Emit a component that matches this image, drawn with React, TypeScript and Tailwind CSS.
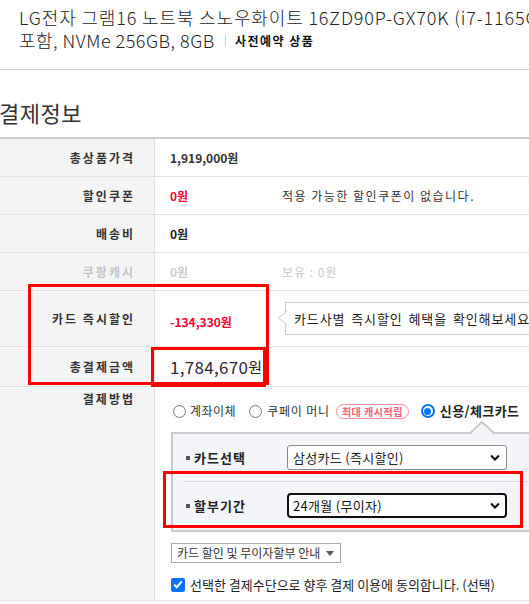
import React from "react";

function Row({
  label,
  h,
  muted,
  children,
  top,
}: {
  label: string;
  h: string;
  muted?: boolean;
  top?: boolean;
  children?: React.ReactNode;
}) {
  return (
    <div className={`flex border-b border-[#e2e2e2] ${h}`}>
      <div
        className={`w-[155px] shrink-0 bg-[#f4f4f4] border-r border-[#e2e2e2] flex justify-end pr-[19px] text-[12px] font-bold tracking-[2px] ${
          top ? "items-start pt-[3px] leading-[18px]" : "items-center"
        } ${muted ? "text-[#c4c4c4]" : "text-[#333]"}`}
      >
        {label}
      </div>
      <div className={`flex-1 flex pl-[15px] text-[12px] ${top ? "flex-col items-start pl-[16px]" : "items-center"}`}>
        {children}
      </div>
    </div>
  );
}

function Chevron() {
  return (
    <svg width="10" height="7" viewBox="0 0 10 7" className="shrink-0">
      <path d="M1 1.5 L5 5.5 L9 1.5" fill="none" stroke="#111" strokeWidth="2" />
    </svg>
  );
}

function Radio({ checked }: { checked?: boolean }) {
  if (checked)
    return (
      <span className="w-[14px] h-[14px] rounded-full border-[2px] border-[#0b74ff] flex items-center justify-center shrink-0 bg-white">
        <span className="w-[7px] h-[7px] rounded-full bg-[#0b74ff]" />
      </span>
    );
  return <span className="block w-[13px] h-[13px] rounded-full border border-[#767676] shrink-0 bg-white" />;
}

export default function App() {
  return (
    <div className="w-[529px] h-[604px] overflow-hidden bg-white relative text-[#333] font-['Noto_Sans_CJK_KR','Noto_Sans',sans-serif]">
      {/* product title */}
      <div className="h-[70px] border-b border-[#d0d0d0] pl-[19px] pt-[6px] whitespace-nowrap text-[#222]">
        <div className="text-[18px] leading-[23px] font-light tracking-[0.85px]">
          LG전자 그램16 노트북 스노우화이트 16ZD90P-GX70K (i7-1165G7, 40.6cm, WIN10 미
        </div>
        <div className="flex items-center h-[23px]">
          <span className="text-[18px] leading-[23px] font-light tracking-[0.5px]">포함, NVMe 256GB, 8GB</span>
          <span className="ml-[10px] mr-[9px] h-[12px] w-px bg-[#cccccc]" />
          <span className="text-[12px] font-bold tracking-[1.5px] text-[#111]">사전예약 상품</span>
        </div>
      </div>

      {/* heading */}
      <div className="h-[67px] pt-[27px]">
        <h2 className="ml-[-1px] text-[22px] leading-[30px] text-[#333] tracking-[0.5px]">결제정보</h2>
      </div>

      {/* table */}
      <div className="border-t-2 border-[#cccccc]">
        <Row label="총상품가격" h="h-[38px]">
          <span className="font-bold">1,919,000원</span>
        </Row>
        <Row label="할인쿠폰" h="h-[38px]">
          <span className="w-[112px] font-bold text-[#ff0033]">0원</span>
          <span className="tracking-[1.5px]">적용 가능한 할인쿠폰이 없습니다.</span>
        </Row>
        <Row label="배송비" h="h-[38px]">
          <span className="font-bold text-[#222]">0원</span>
        </Row>
        <Row label="쿠팡캐시" h="h-[38px]" muted>
          <span className="w-[112px] font-bold text-[#cccccc]">0원</span>
          <span className="text-[#c8c8c8] tracking-[1px]">보유 : 0원</span>
        </Row>
        <Row label="카드 즉시할인" h="h-[56px]">
          <span className="w-[115px] font-bold text-[#ff0033] pt-[6px]">-134,330원</span>
          <div className="relative h-[33px] w-[300px] shrink-0 border border-[#cccccc] bg-white flex items-center pl-[8px] whitespace-nowrap text-[13px] text-[#222] tracking-[0.9px] [word-spacing:2px]">
            <svg width="10" height="16" viewBox="0 0 10 16" className="absolute left-[-9px] top-[7px]">
              <path d="M10 1 L1.5 8 L10 15" fill="#fff" stroke="#cccccc" strokeWidth="1" />
            </svg>
            카드사별 즉시할인 혜택을 확인해보세요
          </div>
        </Row>
        <Row label="총결제금액" h="h-[40px]">
          <span className="text-[17px] leading-[20px] text-[#2a2a3a] tracking-[0.3px]">1,784,670</span>
          <span className="text-[15px] leading-[20px] text-[#222]">원</span>
        </Row>
        <Row label="결제방법" h="h-[214px]" top>
          {/* radios */}
          <div className="mt-[16px] ml-[2px] flex items-center h-[16px] whitespace-nowrap text-[12px] text-[#333] tracking-[0.5px]">
            <Radio />
            <span className="ml-[4px]">계좌이체</span>
            <span className="ml-[13px] flex"><Radio /></span>
            <span className="ml-[5px] tracking-[0.8px]">쿠페이 머니</span>
            <span className="ml-[6px] h-[15px] px-[5px] rounded-full border border-[#ff8c9c] text-[10px] leading-[13px] font-bold text-[#ff5a72] tracking-[0.5px]">
              최대 캐시적립
            </span>
            <span className="ml-[12px] flex"><Radio checked /></span>
            <span className="ml-[5px] text-[13px] font-bold text-[#222] tracking-[0.4px]">신용/체크카드</span>
          </div>

          {/* panel */}
          <div className="relative mt-[13px] w-[400px] border-2 border-[#c8c9cd] bg-[#f4f5f9] pt-[11px] pb-[12px] pl-[11px]">
            <svg width="24" height="14" viewBox="0 0 24 14" className="absolute left-[297px] top-[-14px]">
              <path d="M0 13 L12 2 L24 13" fill="#f4f5f9" stroke="#c8c9cd" strokeWidth="2" />
              <rect x="2" y="12" width="20" height="2" fill="#f4f5f9" />
            </svg>
            <div className="flex items-center h-[25px] ml-[2px]">
              <div className="w-[101px] flex items-center">
                <span className="w-[4px] h-[4px] bg-[#555]" />
                <span className="ml-[4px] text-[13px] font-bold text-[#222] tracking-[1px]">카드선택</span>
              </div>
              <div className="w-[220px] h-[25px] border border-[#8a8a8a] rounded-[3px] bg-white flex items-center justify-between pl-[5px] pr-[6px] text-[13px] text-[#222] tracking-[0.3px]">
                <span>삼성카드 (즉시할인)</span>
                <Chevron />
              </div>
            </div>
            <div className="h-px bg-[#dcdde0] my-[11px]" />
            <div className="flex items-center h-[25px] ml-[2px]">
              <div className="w-[101px] flex items-center">
                <span className="w-[4px] h-[4px] bg-[#555]" />
                <span className="ml-[4px] text-[13px] font-bold text-[#222] tracking-[1px]">할부기간</span>
              </div>
              <div className="w-[220px] h-[25px] border-2 border-[#111] rounded-[4px] bg-white flex items-center justify-between pl-[4px] pr-[5px] text-[13px] text-[#111] tracking-[0.3px]">
                <span>24개월 (무이자)</span>
                <Chevron />
              </div>
            </div>
          </div>

          {/* dropdown */}
          <div className="mt-[11px] w-[170px] h-[20px] border border-[#aaaaaa] bg-white flex items-center pl-[5px] text-[12px] text-[#333] whitespace-nowrap">
            <span>카드 할인 및 무이자할부 안내</span>
            <svg width="8" height="5" viewBox="0 0 8 5" className="ml-[6px]">
              <path d="M0 0 L8 0 L4 5 Z" fill="#555" />
            </svg>
          </div>

          {/* checkbox */}
          <div className="mt-[12px] flex items-center whitespace-nowrap text-[13px] text-[#222]">
            <span className="w-[14px] h-[14px] rounded-[2px] bg-[#0b74ff] flex items-center justify-center shrink-0">
              <svg width="10" height="9" viewBox="0 0 10 9">
                <path d="M1.2 4.6 L3.8 7.2 L8.8 1.4" fill="none" stroke="#fff" strokeWidth="2" />
              </svg>
            </span>
            <span className="ml-[5px]">선택한 결제수단으로 향후 결제 이용에 동의합니다. (선택)</span>
          </div>
        </Row>
      </div>

      {/* red annotation boxes */}
      <div className="absolute left-[28px] top-[284px] w-[241px] h-[101px] border-[3px] border-[#ff0000] pointer-events-none" />
      <div className="absolute left-[151px] top-[347px] w-[115px] h-[40px] border-[3px] border-[#ff0000] pointer-events-none" />
      <div className="absolute left-[163px] top-[471px] w-[360px] h-[57px] border-[3px] border-[#ff0000] pointer-events-none" />
    </div>
  );
}
